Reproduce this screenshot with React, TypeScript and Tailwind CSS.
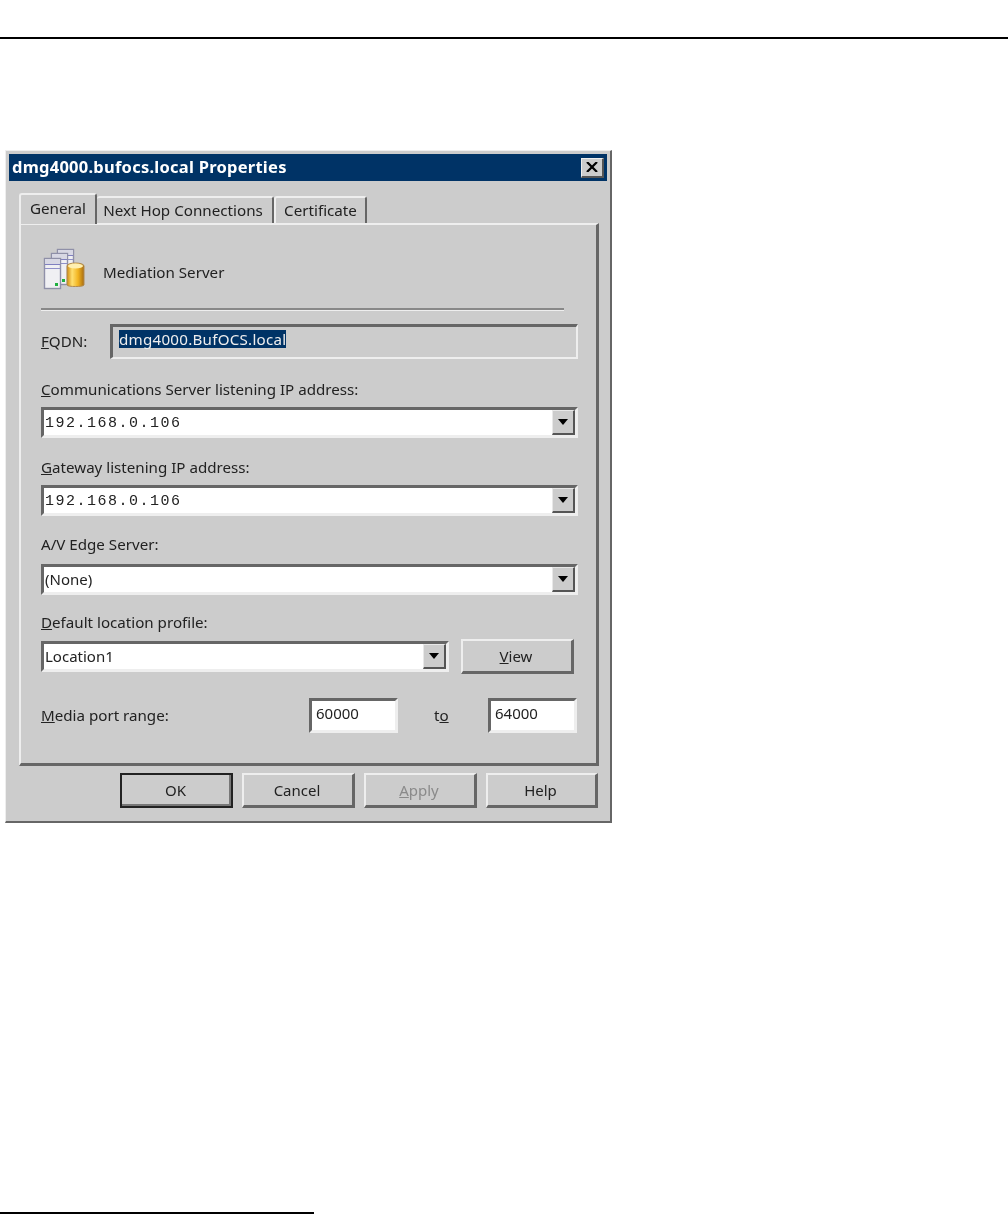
const FONT = "font-['Noto_Sans','Liberation_Sans',sans-serif]";

function ServerIcon() {
  const Server = ({ x, y, h }: { x: number; y: number; h: number }) => (
    <g>
      <rect x={x + 0.5} y={y + 0.5} width="16" height={h} fill="#f0f0f3" stroke="#8f90a8" strokeWidth="1.4" />
      <rect x={x + 1} y={y + 1} width="15" height="5" fill="#d8d8e4" />
      <path d={`M${x + 1} ${y + 6.5}h15`} stroke="#8080c0" strokeWidth="1" />
      <path d={`M${x + 1} ${y + 10.5}h15`} stroke="#9090c8" strokeWidth="1" />
      <rect x={x + 11} y={y + h - 5} width="3" height="3" fill="#20b040" />
    </g>
  );
  return (
    <svg width="44" height="44" viewBox="0 0 44 44" className="block shrink-0">
      <Server x={14} y={1} h={30} />
      <Server x={8} y={5} h={31} />
      <Server x={1} y={10} h={30} />
      <defs>
        <linearGradient id="cyl" x1="0" x2="1" y1="0" y2="0">
          <stop offset="0" stopColor="#d08a10" />
          <stop offset="0.3" stopColor="#ffe070" />
          <stop offset="0.65" stopColor="#f2b420" />
          <stop offset="1" stopColor="#a86c10" />
        </linearGradient>
      </defs>
      <path d="M24 18c0-4 17-4 17 0v19c0 2-17 2-17 0z" fill="url(#cyl)" stroke="#b08a50" />
      <ellipse cx="32.5" cy="18" rx="7.5" ry="2.5" fill="#fff0b0" />
    </svg>
  );
}

function Arrow() {
  return (
    <div className="h-full w-[23px] shrink-0 flex items-center justify-center bg-[#cccccc] border-t border-l border-t-[#e8e8e8] border-l-[#e8e8e8] border-r-2 border-b-2 border-r-[#555555] border-b-[#555555]">
      <svg width="10" height="6" viewBox="0 0 10 6"><path d="M0 0h10L5 6z" fill="#000" /></svg>
    </div>
  );
}

function Combo({ text, mono, className }: { text: string; mono?: boolean; className: string }) {
  return (
    <div className={`flex items-stretch h-[31px] bg-white border-t-[3px] border-l-[3px] border-t-[#666666] border-l-[#666666] border-b-[3px] border-r-[3px] border-b-[#eeeeee] border-r-[#eeeeee] ${className}`}>
      <div className={mono ? "flex-1 pl-[1px] pt-[3px] font-['Liberation_Mono',monospace] text-[15px] font-medium tracking-[1.5px] leading-[22px] text-[#222]" : "flex-1 pl-[1px] text-[15px] leading-[25px] text-[#222]"}>
        {text}
      </div>
      <Arrow />
    </div>
  );
}

function Btn({ children, className, def, w = "w-[113px]" }: { children: React.ReactNode; className?: string; def?: boolean; w?: string }) {
  return (
    <div className={`${w} h-[35px] flex items-center justify-center bg-[#cccccc] text-[15px] pr-[2px] ${def ? "border-2 border-[#222222] shadow-[inset_-2px_-2px_0_#777777]" : "border-t-2 border-l-2 border-t-[#eeeeee] border-l-[#eeeeee] border-r-[3px] border-b-[3px] border-r-[#666666] border-b-[#666666]"} ${className ?? ""}`}>
      {children}
    </div>
  );
}

function NumInput({ value, className }: { value: string; className: string }) {
  return (
    <div className={`h-[35px] bg-white pl-[4px] text-[15px] leading-[24px] text-[#222] border-t-[3px] border-l-[3px] border-t-[#666666] border-l-[#666666] border-b-[3px] border-r-[3px] border-b-[#eeeeee] border-r-[#eeeeee] ${className}`}>
      {value}
    </div>
  );
}

export default function App() {
  return (
    <div className={`w-[1008px] h-[1214px] bg-white overflow-hidden flex flex-col text-[#222] ${FONT}`}>
      <div className="h-[39px] shrink-0 border-b-2 border-black" />
      <div className="ml-[5px] mt-[111px] w-[607px] h-[673px] shrink-0 bg-[#cccccc] border border-t-[#eeeeee] border-l-[#eeeeee] border-r-2 border-b-2 border-r-[#666666] border-b-[#666666] pt-[3px] pl-[3px] blur-[0.35px]">
        <div className="w-[598px] h-[27px] bg-[#003366] flex items-center justify-between pl-[3px] pr-[3px]">
          <span className="text-white font-bold text-[16.5px] tracking-[0.25px] leading-none whitespace-nowrap">dmg4000.bufocs.local Properties</span>
          <div className="w-[23px] h-[20px] flex items-center justify-center bg-[#cccccc] border-t border-l border-t-[#eeeeee] border-l-[#eeeeee] border-r-2 border-b-2 border-r-[#555555] border-b-[#555555]">
            <svg width="12" height="10" viewBox="0 0 12 10"><path d="M1 0L11 10M11 0L1 10" stroke="#000" strokeWidth="2.2" /></svg>
          </div>
        </div>

        <div className="ml-[10px] mt-[12px] w-[579px] h-[30px] flex items-end text-[15.2px]">
          <div className="w-[78px] h-[31px] bg-[#cccccc] relative z-10 -mb-[1px] rounded-t-[3px] border-t-2 border-l-2 border-t-[#eeeeee] border-l-[#eeeeee] border-r-2 border-r-[#666666] flex items-center justify-center pb-[3px]">General</div>
          <div className="w-[177px] h-[27px] bg-[#cccccc] rounded-t-[3px] border-t-2 border-t-[#eeeeee] border-r-2 border-r-[#666666] flex items-center justify-center pr-[3px]">Next Hop Connections</div>
          <div className="w-[93px] h-[27px] bg-[#cccccc] rounded-t-[3px] border-t-2 border-l-2 border-t-[#eeeeee] border-l-[#eeeeee] border-r-2 border-r-[#666666] flex items-center justify-center">Certificate</div>
        </div>

        <div className="ml-[10px] w-[580px] h-[543px] border-t-2 border-l-2 border-t-[#eeeeee] border-l-[#eeeeee] border-r-[3px] border-b-[3px] border-r-[#666666] border-b-[#666666] pl-[20px] text-[15.15px]">
          <div className="flex items-center h-[44px] mt-[23px] ml-[2px]">
            <ServerIcon />
            <span className="ml-[16px] mt-[4px]">Mediation Server</span>
          </div>
          <div className="mt-[16px] w-[523px] h-[3px] border-t-2 border-t-[#888888] border-b border-b-[#eeeeee]" />

          <div className="mt-[13px] flex items-center h-[35px]">
            <span className="w-[69px]"><u>F</u>QDN:</span>
            <div className="w-[468px] h-[35px] border-t-[3px] border-l-[3px] border-t-[#666666] border-l-[#666666] border-b-2 border-r-2 border-b-[#eeeeee] border-r-[#eeeeee] pl-[6px] pt-[3px]">
              <span className="block bg-[#003366] text-[#eeeeee] leading-[18px] h-[18px] tracking-[0.25px] w-[167px] whitespace-nowrap">dmg4000.BufOCS.local</span>
            </div>
          </div>

          <div className="mt-[20px] leading-[20px]"><u>C</u>ommunications Server listening IP address:</div>
          <Combo text="192.168.0.106" mono className="mt-[8px] w-[537px]" />
          <div className="mt-[19px] leading-[20px]"><u>G</u>ateway listening IP address:</div>
          <Combo text="192.168.0.106" mono className="mt-[8px] w-[537px]" />
          <div className="mt-[18px] leading-[20px]">A/V Edge Server:</div>
          <Combo text="(None)" className="mt-[10px] w-[537px]" />
          <div className="mt-[17px] leading-[20px]"><u>D</u>efault location profile:</div>
          <div className="mt-[7px] flex items-center w-[533px] justify-between">
            <Combo text="Location1" className="w-[408px]" />
            <Btn w="w-[113px]"><span><u>V</u>iew</span></Btn>
          </div>
          <div className="mt-[24px] flex items-center h-[35px]">
            <span className="w-[268px]"><u>M</u>edia port range:</span>
            <NumInput value="60000" className="w-[89px]" />
            <span className="ml-[36px] w-[54px]">t<u>o</u></span>
            <NumInput value="64000" className="w-[89px]" />
          </div>
        </div>

        <div className="ml-[111px] mt-[7px] flex gap-[9px]">
          <Btn def>OK</Btn>
          <Btn>Cancel</Btn>
          <Btn className="text-[#8a8a8a]"><span><u>A</u>pply</span></Btn>
          <Btn w="w-[112px]">Help</Btn>
        </div>
      </div>
      <div className="mt-[389px] w-[314px] h-[2px] bg-black shrink-0" />
    </div>
  );
}
